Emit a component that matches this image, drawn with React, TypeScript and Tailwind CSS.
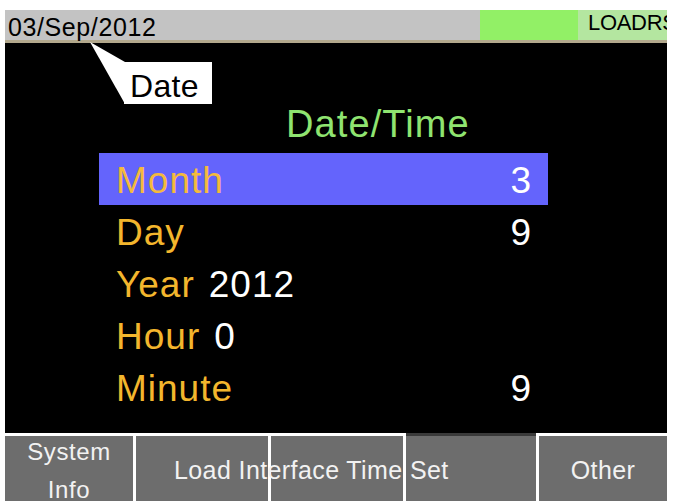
import React from "react";

type Row = { label: string; value: string; inline?: boolean };

const rows: Row[] = [
  { label: "Month", value: "3" },
  { label: "Day", value: "9" },
  { label: "Year", value: "2012", inline: true },
  { label: "Hour", value: "0", inline: true },
  { label: "Minute", value: "9" },
];

const SettingRow = ({ row, active }: { row: Row; active: boolean }) => {
  return (
    <div
      className={`h-[52px] flex items-center pl-[17px] pr-[16px] pt-[2px] text-[37px] leading-none tracking-[1px] ${
        active ? "bg-[#6464fc]" : ""
      }`}
    >
      <span className={active ? "text-[#f4ba3c]" : "text-[#f3b62d]"}>{row.label}</span>
      {row.inline ? (
        <span className="ml-[14px] text-white">{row.value}</span>
      ) : (
        <span className="ml-auto text-white">{row.value}</span>
      )}
    </div>
  );
};

const App = () => {
  return (
    <div className="w-[687px] h-[501px] bg-white overflow-hidden font-['Liberation_Sans',Arial,sans-serif]">
      <div className="relative ml-[5px] mt-[10px] w-[662px] h-[491px] overflow-hidden flex flex-col bg-black">
        {/* status bar */}
        <div className="h-[33px] shrink-0 flex bg-[#c3c3c3] border-b-[3px] border-[#b2a88c] text-black leading-none">
          <div className="w-[475px] shrink-0 pl-[3px] pt-[5px] text-[25px] tracking-[0.6px]">03/Sep/2012</div>
          <div className="w-[98px] shrink-0 bg-[#92f066]" />
          <div className="min-w-0 flex-1 bg-[#b4e6a0] pl-[10px] pt-[2px] text-[22px] tracking-[-0.3px] whitespace-nowrap">
            LOADRS
          </div>
        </div>

        {/* main panel */}
        <div className="h-[390px] shrink-0 bg-black flex flex-col">
          <div className="h-[110px] flex items-end pl-[281px] pb-[10px] text-[38px] leading-none tracking-[1.1px] text-[#8fe470]">
            Date/Time
          </div>
          <div className="ml-[94px] w-[449px] flex flex-col">
            {rows.map((row, i) => (
              <SettingRow key={row.label} row={row} active={i === 0} />
            ))}
          </div>
        </div>

        {/* soft keys */}
        <div className="h-[68px] shrink-0 bg-white pt-[3px] flex gap-[3px] text-[#f2f2f2]">
          <div className="w-[128px] shrink-0 bg-[#6d6d6d] flex flex-col items-center text-[24px] leading-none tracking-[0.6px]">
            <span className="pt-[4px]">System</span>
            <div className="mt-[6px] w-[105px] h-[2px] bg-[#d8d8d8]" />
            <span className="mt-[8px]">Info</span>
          </div>
          <div className="w-[132px] shrink-0 bg-[#6d6d6d] pl-[38px] pt-[22px] text-[25px] leading-none tracking-[0.4px]">
            <span className="relative z-10 whitespace-nowrap">Load Interface Time Set</span>
          </div>
          <div className="w-[132px] shrink-0 bg-[#6d6d6d]" />
          <div className="w-[130px] shrink-0 bg-[#6d6d6d] -mt-[3px] border-t-[3px] border-[#3a3a3a]" />
          <div className="w-[128px] shrink-0 bg-[#6d6d6d] flex justify-center pt-[22px] text-[25px] leading-none tracking-[0.4px]">
            Other
          </div>
        </div>

        {/* callout for the date field */}
        <svg className="absolute left-0 top-0 pointer-events-none" width="130" height="100">
          <polygon points="85,32 120,52 120,94" fill="#ffffff" />
        </svg>
        <div className="absolute left-[119px] top-[52px] w-[88px] h-[42px] bg-white text-black text-[32px] leading-none pl-[6px] pt-[8px] tracking-[0.3px]">
          Date
        </div>
      </div>
    </div>
  );
};

export default App;
